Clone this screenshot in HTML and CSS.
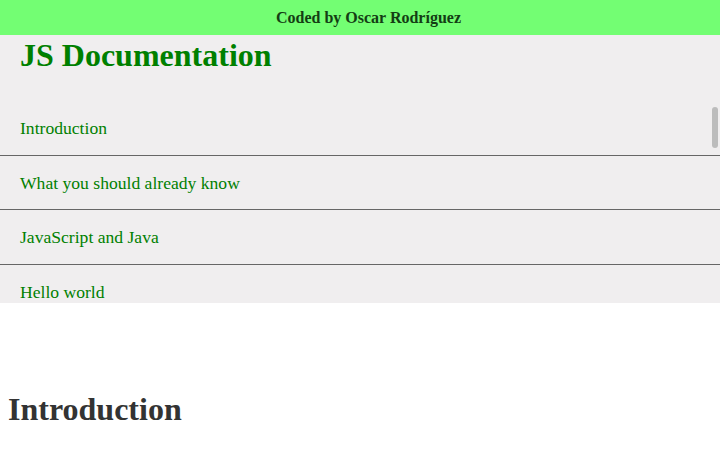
FILE: index.html
```html
<!DOCTYPE html>
<html lang="en">
<head>
<meta charset="utf-8">
<title>JS Documentation</title>
<link rel="stylesheet" href="styles.css">
</head>
<body>
<header class="topbar">Coded by Oscar Rodríguez</header>
<nav class="navbar">
  <h1 class="nav-title">JS Documentation</h1>
  <div class="nav-scroll">
    <ul class="nav-list">
      <li><a class="nav-link" href="#Introduction">Introduction</a></li>
      <li><a class="nav-link" href="#What_you_should_already_know">What you should already know</a></li>
      <li><a class="nav-link" href="#JavaScript_and_Java">JavaScript and Java</a></li>
      <li><a class="nav-link" href="#Hello_world">Hello world</a></li>
    </ul>
    <div class="thumb"></div>
  </div>
</nav>
<main class="main-doc">
  <section class="main-section" id="Introduction">
    <h1 class="section-title">Introduction</h1>
  </section>
</main>
</body>
</html>
```

FILE: styles.css
```css
html, body {
  margin: 0;
  padding: 0;
  background: #ffffff;
  font-family: "Liberation Serif", "Times New Roman", serif;
  overflow: hidden;
}

.topbar {
  height: 35px;
  box-sizing: border-box;
  padding: 9px 0 0 17px;
  background: #73fe73;
  color: #143d14;
  font-weight: bold;
  font-size: 16px;
  text-align: center;
}

.navbar {
  height: 268px;
  background: #f0eeef;
  display: flex;
  flex-direction: column;
}

.nav-title {
  margin: 2px 0 0 20px;
  font-size: 32px;
  font-weight: bold;
  color: #008000;
  height: 64px;
  flex: none;
}

.nav-scroll {
  position: relative;
  flex: 1;
  overflow: hidden;
}

.nav-list {
  list-style: none;
  margin: 0;
  padding: 0;
}

.nav-list li {
  border-bottom: 1px solid #666666;
}

.nav-link {
  display: block;
  padding: 17px 20px 16.5px;
  font-size: 17.6px;
  line-height: 20px;
  color: #008000;
  text-decoration: none;
}

.thumb {
  position: absolute;
  top: 6px;
  right: 2px;
  width: 6px;
  height: 41px;
  border-radius: 3px;
  background: #bcbcbc;
}

.main-doc {
  padding: 88px 8px 0;
}

.section-title {
  margin: 0;
  font-size: 32px;
  font-weight: bold;
  color: #333333;
}
```
